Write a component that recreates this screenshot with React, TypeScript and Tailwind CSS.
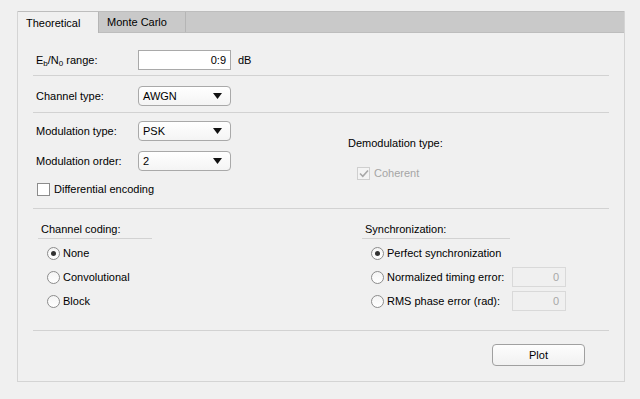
import React from 'react'

const font = "font-['Liberation_Sans',Arial,sans-serif]"

const Label: React.FC<{ children: React.ReactNode; className?: string }> = ({ children, className = '' }) => (
  <span className={`whitespace-nowrap text-[11px] leading-[14px] text-[#000] ${className}`}>{children}</span>
)

const Dropdown: React.FC<{ value: string }> = ({ value }) => (
  <div className="flex h-[20px] w-[93px] items-center justify-between rounded-[4px] border border-[#a9a9a9] bg-gradient-to-b from-[#ffffff] to-[#f4f4f4] pl-[4px] pr-[8px]">
    <span className="text-[11px] leading-[14px] text-[#000]">{value}</span>
    <svg width="9" height="6" viewBox="0 0 9 6">
      <path d="M0 0 H9 L4.5 6 Z" fill="#111" />
    </svg>
  </div>
)

const Separator: React.FC<{ className?: string }> = ({ className = '' }) => (
  <div className={`h-px w-full bg-[#d2d2d2] ${className}`} />
)

const Radio: React.FC<{ checked?: boolean }> = ({ checked }) => (
  <div className="flex h-[13px] w-[13px] shrink-0 items-center justify-center rounded-full border border-[#8c8c8c] bg-gradient-to-b from-[#f4f4f4] to-[#ffffff]">
    {checked && <div className="h-[5px] w-[5px] rounded-full bg-[#333]" />}
  </div>
)

const RadioRow: React.FC<{ checked?: boolean; children: React.ReactNode }> = ({ checked, children }) => (
  <div className="flex h-[24px] items-center gap-[3px]">
    <Radio checked={checked} />
    <Label>{children}</Label>
  </div>
)

const DisabledBox: React.FC = () => (
  <div className="flex h-[20px] w-[54px] items-center justify-end border border-[#d9d9d9] bg-[#f0f0f0] pr-[6px]">
    <span className="text-[11px] leading-[14px] text-[#a8a8a8]">0</span>
  </div>
)

export default function App() {
  return (
    <div className={`min-h-[399px] w-[640px] bg-[#f0f0f0] pl-[17px] pt-[11px] ${font}`}>
      <div className="flex h-[371px] w-[608px] flex-col border border-t-0 border-[#d4d4d4]">
        {/* tab strip */}
        <div className="flex h-[22px] border-b border-t border-[#bdbdbd] bg-[#c9c9c9]">
          <div className="mb-[-1px] flex w-[81px] items-center border-r border-[#b5b5b5] bg-[#f0f0f0] pl-[8px]">
            <Label>Theoretical</Label>
          </div>
          <div className="flex w-[87px] items-center border-r border-[#b5b5b5] pl-[8px]">
            <Label>Monte Carlo</Label>
          </div>
        </div>

        <div className="flex flex-1 flex-col pl-[15px] pr-[15px]">
          {/* Eb/N0 */}
          <div className="mt-[17px] flex h-[20px] items-center">
            <Label className="w-[105px] pl-[3px]">
              E<sub className="text-[8px]">b</sub>/N<sub className="text-[8px]">0</sub> range:
            </Label>
            <div className="flex h-[20px] w-[93px] items-center justify-end border border-[#a9a9a9] bg-white pr-[4px]">
              <span className="text-[11px] leading-[14px] text-[#000]">0:9</span>
            </div>
            <Label className="ml-[7px]">dB</Label>
          </div>
          <Separator className="mt-[5px]" />

          {/* Channel type */}
          <div className="mt-[10px] flex h-[20px] items-center">
            <Label className="w-[105px] pl-[3px]">Channel type:</Label>
            <Dropdown value="AWGN" />
          </div>
          <Separator className="mt-[6px]" />

          {/* Modulation */}
          <div className="flex">
            <div className="flex w-[315px] flex-col">
              <div className="mt-[8px] flex h-[20px] items-center">
                <Label className="w-[105px] pl-[3px]">Modulation type:</Label>
                <Dropdown value="PSK" />
              </div>
              <div className="mt-[10px] flex h-[20px] items-center">
                <Label className="w-[105px] pl-[3px]">Modulation order:</Label>
                <Dropdown value="2" />
              </div>
              <div className="mt-[11px] flex h-[14px] items-center gap-[4px] pl-[4px]">
                <div className="h-[13px] w-[13px] border border-[#8c8c8c] bg-white" />
                <Label>Differential encoding</Label>
              </div>
            </div>
            <div className="flex flex-col">
              <Label className="mt-[23px]">Demodulation type:</Label>
              <div className="mt-[16px] flex items-center gap-[4px] pl-[9px]">
                <div className="flex h-[13px] w-[13px] items-center justify-center border border-[#cfcfcf] bg-[#f4f4f4]">
                  <svg width="10" height="9" viewBox="0 0 10 9">
                    <path d="M1 4.5 L3.8 7.3 L9 1.5" fill="none" stroke="#a8a8a8" strokeWidth="1.6" />
                  </svg>
                </div>
                <span className="text-[11px] leading-[14px] text-[#a5a5a5]">Coherent</span>
              </div>
            </div>
          </div>
          <Separator className="mt-[12px]" />

          {/* Coding / synchronization */}
          <div className="flex">
            <div className="ml-[5px] flex w-[324px] flex-col">
              <div className="mt-[13px] w-[114px] border-b border-[#d2d2d2] pb-[2px] pl-[3px]">
                <Label className="block">Channel coding:</Label>
              </div>
              <div className="mt-[2px] flex flex-col pl-[9px]">
                <RadioRow checked>None</RadioRow>
                <RadioRow>Convolutional</RadioRow>
                <RadioRow>Block</RadioRow>
              </div>
            </div>
            <div className="flex flex-col">
              <div className="mt-[13px] w-[148px] border-b border-[#d2d2d2] pb-[2px] pl-[3px]">
                <Label className="block">Synchronization:</Label>
              </div>
              <div className="mt-[2px] flex flex-col pl-[9px]">
                <RadioRow checked>Perfect synchronization</RadioRow>
                <div className="flex h-[24px] items-center">
                  <div className="flex w-[141px] items-center gap-[3px]">
                    <Radio />
                    <Label>Normalized timing error:</Label>
                  </div>
                  <DisabledBox />
                </div>
                <div className="flex h-[24px] items-center">
                  <div className="flex w-[141px] items-center gap-[3px]">
                    <Radio />
                    <Label>RMS phase error (rad):</Label>
                  </div>
                  <DisabledBox />
                </div>
              </div>
            </div>
          </div>
          <Separator className="mt-[17px]" />

          {/* Plot */}
          <div className="mt-[13px] flex justify-end pr-[24px]">
            <button className="h-[22px] w-[93px] rounded-[4px] border border-[#a0a0a0] bg-gradient-to-b from-[#fdfdfd] to-[#f1f1f1] text-[11px] leading-[14px] text-[#000]">
              Plot
            </button>
          </div>
        </div>
      </div>
    </div>
  )
}
